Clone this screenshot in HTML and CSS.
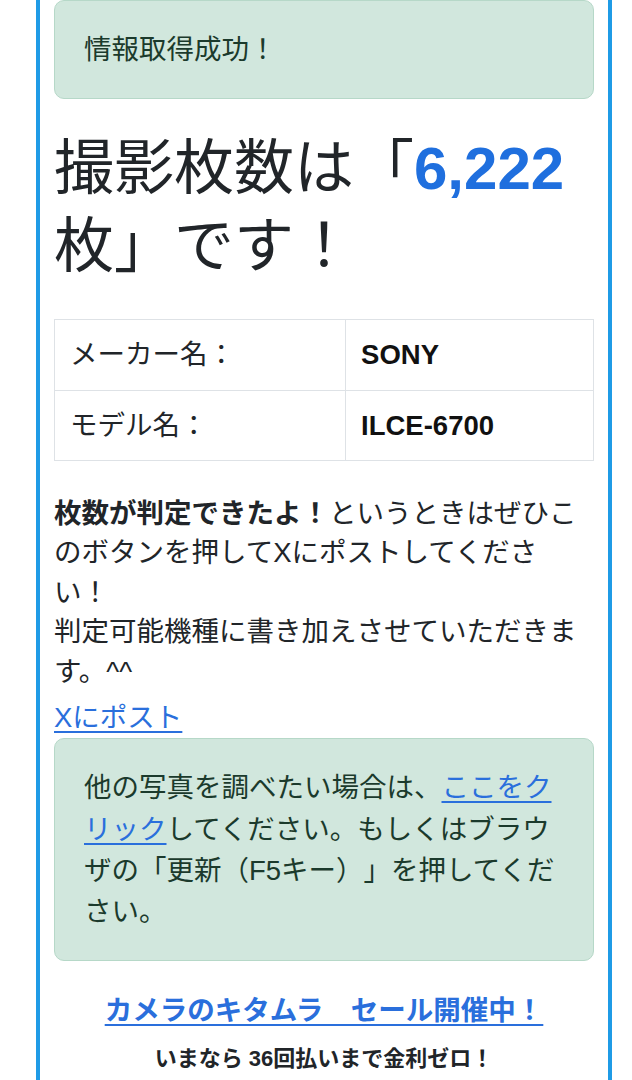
FILE: index.html
```html
<!DOCTYPE html>
<html lang="ja">
<head>
<meta charset="utf-8">
<meta name="viewport" content="width=device-width, initial-scale=1">
<title>撮影枚数チェック</title>
<link rel="stylesheet" href="styles.css">
</head>
<body>
<main class="page">
  <div class="alert">情報取得成功！</div>

  <h1 class="result">撮影枚数は「<span class="count">6,222</span>枚」です！</h1>

  <table class="info">
    <tr>
      <th>メーカー名：</th>
      <td>SONY</td>
    </tr>
    <tr>
      <th>モデル名：</th>
      <td>ILCE-6700</td>
    </tr>
  </table>

  <p class="note"><strong>枚数が判定できたよ！</strong>というときはぜひこのボタンを押してXにポストしてください！<br>判定可能機種に書き加えさせていただきます。^^</p>
  <a href="#" class="link post-link">Xにポスト</a>

  <div class="alert">他の写真を調べたい場合は、<a href="#" class="link">ここをクリック</a>してください。もしくはブラウザの「更新（F5キー）」を押してください。</div>

  <p class="promo"><a href="#" class="promo-link">カメラのキタムラ　セール開催中！</a></p>
  <p class="promo-note">いまなら 36回払いまで金利ゼロ！</p>
</main>
</body>
</html>
```

FILE: styles.css
```css
html, body {
  margin: 0;
  padding: 0;
  background: #ffffff;
}

body {
  font-family: "Liberation Sans", "Noto Sans CJK JP", sans-serif;
  font-size: 27.5px;
  line-height: 1.5;
  color: #212529;
  text-spacing-trim: space-all;
}

.page {
  margin: 0 20px 0 36px;
  padding: 0 14px;
  border-left: 4px solid #1f9be6;
  border-right: 4px solid #1f9be6;
  min-height: 1080px;
}

.alert {
  background: #d1e7dd;
  border: 1px solid #b6d8c8;
  border-radius: 10px;
  padding: 28px 29px;
  color: #1b3a2c;
}

.result {
  margin: 31px 0 33px;
  font-size: 60px;
  line-height: 78px;
  font-weight: 400;
  color: #212529;
}

.count {
  color: #1f6fde;
  font-weight: 700;
}

.info {
  width: 100%;
  border-collapse: collapse;
  border: 1px solid #dee2e6;
}

.info th,
.info td {
  border: 1px solid #dee2e6;
  padding: 14px 15px;
  text-align: left;
  vertical-align: middle;
}

.info th {
  width: 54%;
  font-weight: 400;
}

.info td {
  font-weight: 700;
  color: #111;
}

.note {
  margin: 33px 12px 0 0;
  line-height: 39.5px;
}

.note strong {
  font-weight: 700;
}

.link {
  color: #2a6fdc;
  text-decoration: underline;
  text-underline-offset: 4px;
}

.post-link {
  display: table;
  margin-top: 6px;
  line-height: 41px;
}

.promo {
  margin: 29px 0 0;
  text-align: center;
}

.promo-link {
  color: #2a6fdc;
  font-weight: 700;
  text-decoration: underline;
  text-underline-offset: 4px;
}

.promo-note {
  margin: 10px 0 0;
  text-align: center;
  font-size: 22px;
  font-weight: 700;
  color: #212529;
}
```
